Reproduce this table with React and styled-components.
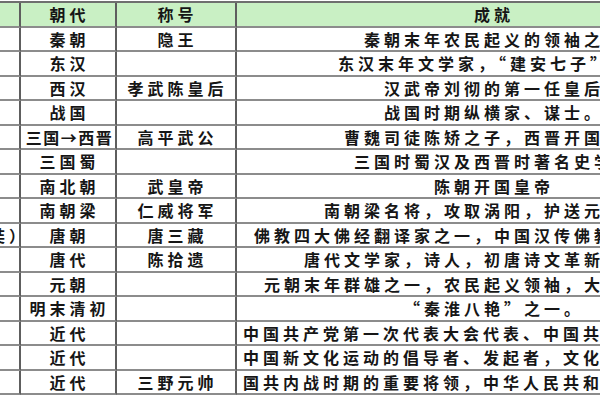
import React from 'react';
import styled, { createGlobalStyle } from 'styled-components';

const GlobalStyle = createGlobalStyle`
  html, body {
    margin: 0;
    padding: 0;
    background: #fff;
    overflow: hidden;
  }
`;

const Page = styled.div`
  width: 600px;
  height: 400px;
  overflow: hidden;
  background: #fff;
`;

const Table = styled.div`
  display: grid;
  grid-template-columns: 120px 96px 120px 510px;
  grid-auto-rows: 24.5px;
  margin-left: -99px;
  margin-top: 1px;
  border-top: 2px solid #6f6f6f;
  font-family: "Noto Sans CJK SC", "Noto Sans", sans-serif;
`;

const Cell = styled.div`
  box-sizing: border-box;
  border-right: 2px solid #5e5e5e;
  border-bottom: 2px solid #8c8c8c;
  background: ${p => (p.$head ? '#c9f0c4' : '#fff')};
  color: #161616;
  font-size: 16px;
  font-weight: 700;
  letter-spacing: ${p => (p.$tight ? '1.5px' : '4px')};
  line-height: 22px;
  text-align: center;
  padding-left: ${p => p.$pad || '3px'};
  white-space: nowrap;
  overflow: hidden;
`;

const rows = [
  ['陈胜', '秦朝', '隐王', '秦朝末年农民起义的领袖之一'],
  ['陈琳', '东汉', '', '东汉末年文学家，“建安七子”之一'],
  ['陈阿娇', '西汉', '孝武陈皇后', '汉武帝刘彻的第一任皇后'],
  ['陈轸', '战国', '', '战国时期纵横家、谋士。'],
  ['陈骞', '三国→西晋', '高平武公', '曹魏司徒陈矫之子，西晋开国元勋'],
  ['陈寿', '三国蜀', '', '三国时蜀汉及西晋时著名史学家'],
  ['陈霸先', '南北朝', '武皇帝', '陈朝开国皇帝'],
  ['陈庆之', '南朝梁', '仁威将军', '南朝梁名将，攻取涡阳，护送元颢入洛'],
  ['陈祎（玄奘）', '唐朝', '唐三藏', '佛教四大佛经翻译家之一，中国汉传佛教唯识宗创始人'],
  ['陈子昂', '唐代', '陈拾遗', '唐代文学家，诗人，初唐诗文革新人物之一'],
  ['陈友谅', '元朝', '', '元朝末年群雄之一，农民起义领袖，大汉政权建立者'],
  ['陈圆圆', '明末清初', '', '“秦淮八艳”之一。'],
  ['陈潭秋', '近代', '', '中国共产党第一次代表大会代表、中国共产党早期重要领导人之一'],
  ['陈独秀', '近代', '', '中国新文化运动的倡导者、发起者，文化运动的主要领导人之一'],
  ['陈毅', '近代', '三野元帅', '国共内战时期的重要将领，中华人民共和国十大开国元帅之一'],
];

export default function App() {
  return (
    <Page>
      <GlobalStyle />
      <Table>
        <Cell $head $pad="8px">姓名</Cell>
        <Cell $head>朝代</Cell>
        <Cell $head>称号</Cell>
        <Cell $head $pad="6px">成就</Cell>
        {rows.map((r, i) => (
          <React.Fragment key={i}>
            <Cell $pad="8px">{r[0]}</Cell>
            <Cell $tight={r[1].length > 4}>{r[1]}</Cell>
            <Cell>{r[2]}</Cell>
            <Cell $pad="6px">{r[3]}</Cell>
          </React.Fragment>
        ))}
      </Table>
    </Page>
  );
}
